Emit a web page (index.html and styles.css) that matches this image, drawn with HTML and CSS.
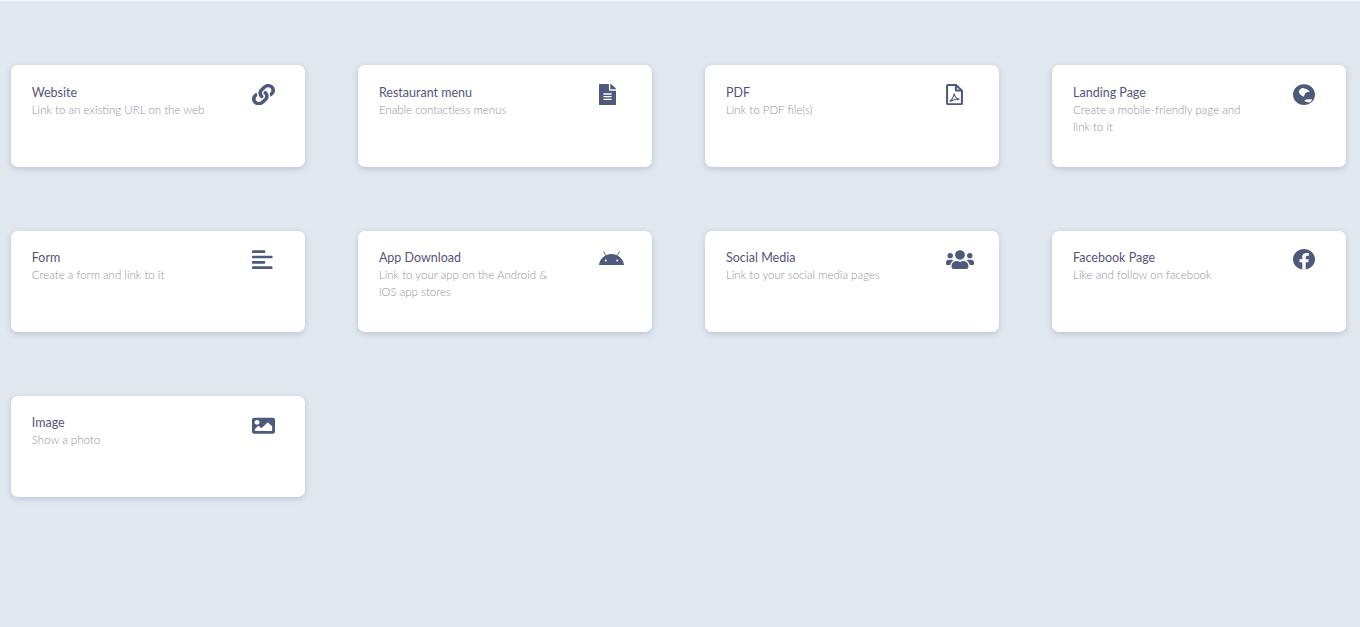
FILE: index.html
```html
<!DOCTYPE html>
<html lang="en">

<head>
    <meta charset="UTF-8">
    <meta name="viewport" content="width=device-width, initial-scale=1.0">
    <title>QR code types</title>
    <link rel="stylesheet" href="styles.css">
</head>

<body>

    <div class="type-grid">

        <div class="card">
            <div class="card-text">
                <h3>Website</h3>
                <p>Link to an existing URL on the web</p>
            </div>
            <svg class="icon icon-link" viewBox="0 0 512 512" preserveAspectRatio="none"><path d="M326.612 185.391c59.747 59.809 58.927 155.698.36 214.59-.11.12-.24.25-.36.37l-67.2 67.2c-59.27 59.27-155.699 59.262-214.96 0-59.27-59.26-59.27-155.7 0-214.96l37.106-37.106c9.84-9.84 26.786-3.3 27.294 10.606.648 17.722 3.826 35.527 9.69 52.721 1.986 5.822.567 12.262-3.783 16.612l-13.087 13.087c-28.026 28.026-28.905 73.66-1.155 101.96 28.024 28.579 74.086 28.749 102.325.51l67.2-67.19c28.191-28.191 28.073-73.757 0-101.83-3.701-3.694-7.429-6.564-10.341-8.569a16.037 16.037 0 0 1-6.947-12.606c-.396-10.567 3.348-21.456 11.698-29.806l21.054-21.055c5.521-5.521 14.182-6.199 20.584-1.731a152.482 152.482 0 0 1 20.522 17.197zM467.547 44.449c-59.261-59.262-155.69-59.27-214.96 0l-67.2 67.2c-.12.12-.25.25-.36.37-58.566 58.892-59.387 154.781.36 214.59a152.454 152.454 0 0 0 20.521 17.196c6.402 4.468 15.064 3.789 20.584-1.731l21.054-21.055c8.35-8.35 12.094-19.239 11.698-29.806a16.037 16.037 0 0 0-6.947-12.606c-2.912-2.005-6.64-4.875-10.341-8.569-28.073-28.073-28.191-73.639 0-101.83l67.2-67.19c28.239-28.239 74.3-28.069 102.325.51 27.75 28.3 26.872 73.934-1.155 101.96l-13.087 13.087c-4.35 4.35-5.769 10.79-3.783 16.612 5.864 17.194 9.042 34.999 9.69 52.721.509 13.906 17.454 20.446 27.294 10.606l37.106-37.106c59.271-59.259 59.271-155.699.001-214.959z"/></svg>
        </div>

        <div class="card">
            <div class="card-text">
                <h3>Restaurant menu</h3>
                <p>Enable contactless menus</p>
            </div>
            <svg class="icon icon-file" viewBox="0 0 384 512" preserveAspectRatio="none"><path d="M224 136V0H24C10.7 0 0 10.7 0 24v464c0 13.3 10.7 24 24 24h336c13.3 0 24-10.7 24-24V160H248c-13.2 0-24-10.8-24-24zm64 236c0 6.6-5.4 12-12 12H108c-6.6 0-12-5.4-12-12v-8c0-6.6 5.4-12 12-12h168c6.6 0 12 5.4 12 12v8zm0-64c0 6.6-5.4 12-12 12H108c-6.6 0-12-5.4-12-12v-8c0-6.6 5.4-12 12-12h168c6.6 0 12 5.4 12 12v8zm0-72v8c0 6.6-5.4 12-12 12H108c-6.6 0-12-5.4-12-12v-8c0-6.6 5.4-12 12-12h168c6.6 0 12 5.4 12 12zm96-114.1v6.1H256V0h6.1c6.4 0 12.5 2.5 17 7l97.9 98c4.5 4.5 7 10.6 7 16.9z"/></svg>
        </div>

        <div class="card">
            <div class="card-text">
                <h3>PDF</h3>
                <p>Link to PDF file(s)</p>
            </div>
            <svg class="icon icon-file" viewBox="0 0 384 512" preserveAspectRatio="none"><path class="pdf-outline" d="M48 24h176l136 136v304c0 13-11 24-24 24H48c-13 0-24-11-24-24V48c0-13 11-24 24-24z"/><path class="pdf-fold" d="M224 30v112c0 8 6 14 14 14h116"/><path class="pdf-mark" d="M84 420c40-30 80-90 100-190 10 70 50 120 120 136-70 0-150 14-220 54z"/></svg>
        </div>

        <div class="card">
            <div class="card-text">
                <h3>Landing Page</h3>
                <p>Create a mobile-friendly page and link to it</p>
            </div>
            <svg class="icon icon-globe" viewBox="0 0 496 512" preserveAspectRatio="none"><path fill-rule="evenodd" d="M248 8C111.03 8 0 119.03 0 256s111.03 248 248 248 248-111.03 248-248S384.97 8 248 8zM130 175c25-45 55-75 90-80l80 25c30 10 60 40 75 75-40 0-80 10-105 30-5 35-15 65-30 80-30-15-55-35-75-55-20-20-35-45-35-75zm120 225c50-30 120-40 180-25-10 35-30 55-50 70-40-5-90-15-130-45z"/></svg>
        </div>

        <div class="card">
            <div class="card-text">
                <h3>Form</h3>
                <p>Create a form and link to it</p>
            </div>
            <svg class="icon icon-align" viewBox="0 0 448 512" preserveAspectRatio="none"><path d="M12.83 352h262.34A12.82 12.82 0 0 0 288 339.17v-38.34A12.82 12.82 0 0 0 275.17 288H12.83A12.82 12.82 0 0 0 0 300.83v38.34A12.82 12.82 0 0 0 12.83 352zm0-256h262.34A12.82 12.82 0 0 0 288 83.17V44.83A12.82 12.82 0 0 0 275.17 32H12.83A12.82 12.82 0 0 0 0 44.83v38.34A12.82 12.82 0 0 0 12.83 96zM432 160H16a16 16 0 0 0-16 16v32a16 16 0 0 0 16 16h416a16 16 0 0 0 16-16v-32a16 16 0 0 0-16-16zm0 256H16a16 16 0 0 0-16 16v32a16 16 0 0 0 16 16h416a16 16 0 0 0 16-16v-32a16 16 0 0 0-16-16z"/></svg>
        </div>

        <div class="card">
            <div class="card-text">
                <h3>App Download</h3>
                <p>Link to your app on the Android &amp; iOS app stores</p>
            </div>
            <svg class="icon icon-android" viewBox="0 0 576 512" preserveAspectRatio="none"><path d="M420.55,301.93a24,24,0,1,1,24-24,24,24,0,0,1-24,24m-265.1,0a24,24,0,1,1,24-24,24,24,0,0,1-24,24m273.7-144.48,47.94-83a10,10,0,1,0-17.27-10h0l-48.54,84.07a301.25,301.25,0,0,0-246.56,0L116.18,64.45a10,10,0,1,0-17.27,10h0l47.94,83C64.53,202.22,8.24,285.55,0,384H576c-8.24-98.45-64.54-181.78-146.85-226.55"/></svg>
        </div>

        <div class="card">
            <div class="card-text">
                <h3>Social Media</h3>
                <p>Link to your social media pages</p>
            </div>
            <svg class="icon icon-users" viewBox="0 0 640 512" preserveAspectRatio="none"><path d="M96 224c35.3 0 64-28.7 64-64s-28.7-64-64-64-64 28.7-64 64 28.7 64 64 64zm448 0c35.3 0 64-28.7 64-64s-28.7-64-64-64-64 28.7-64 64 28.7 64 64 64zm32 32h-64c-17.6 0-33.5 7.1-45.1 18.6 40.3 22.1 68.9 62 75.1 109.4h66c17.7 0 32-14.3 32-32v-32c0-35.3-28.7-64-64-64zm-256 0c61.9 0 112-50.1 112-112S381.9 32 320 32 208 82.1 208 144s50.1 112 112 112zm76.8 32h-8.3c-20.8 10-43.9 16-68.5 16s-47.6-6-68.5-16h-8.3C179.6 288 128 339.6 128 403.2V432c0 26.5 21.5 48 48 48h288c26.5 0 48-21.5 48-48v-28.8c0-63.6-51.6-115.2-115.2-115.2zm-223.7-13.4C161.5 263.1 145.6 256 128 256H64c-35.3 0-64 28.7-64 64v32c0 17.7 14.3 32 32 32h65.9c6.3-47.4 34.9-87.3 75.2-109.4z"/></svg>
        </div>

        <div class="card">
            <div class="card-text">
                <h3>Facebook Page</h3>
                <p>Like and follow on facebook</p>
            </div>
            <svg class="icon icon-square" viewBox="8 8 496 512" preserveAspectRatio="none"><path d="M504 256C504 119 393 8 256 8S8 119 8 256c0 123.78 90.69 226.38 209.25 245V327.69h-63V256h63v-54.64c0-62.15 37-96.48 93.67-96.48 27.14 0 55.52 4.82 55.52 4.82v61h-31.28c-30.8 0-40.41 19.12-40.41 38.73V256h68.78l-11 71.69h-57.78V501C413.31 482.38 504 379.78 504 256z"/></svg>
        </div>

        <div class="card">
            <div class="card-text">
                <h3>Image</h3>
                <p>Show a photo</p>
            </div>
            <svg class="icon icon-link" viewBox="0 0 512 512" preserveAspectRatio="none"><path d="M464 448H48c-26.51 0-48-21.49-48-48V112c0-26.51 21.49-48 48-48h416c26.51 0 48 21.49 48 48v288c0 26.51-21.49 48-48 48zM112 120c-30.928 0-56 25.072-56 56s25.072 56 56 56 56-25.072 56-56-25.072-56-56-56zM64 384h384V272l-87.515-87.515c-4.686-4.686-12.284-4.686-16.971 0L208 320l-55.515-55.515c-4.686-4.686-12.284-4.686-16.971 0L64 336v48z"/></svg>
        </div>

    </div>

</body>

</html>
```

FILE: styles.css
```css
body {
    margin: 0;
    height: 627px;
    box-sizing: border-box;
    overflow: hidden;
    font-family: Lato, "Open Sans", sans-serif;
    background: #e1e8f0;
    border-top: 1px solid #f4f6f9;
}

.type-grid {
    display: grid;
    grid-template-columns: repeat(4, 293.8px);
    column-gap: 53.3px;
    row-gap: 64px;
    padding: 64.3px 0 0 11.2px;
}

.card {
    display: grid;
    grid-template-columns: 180px 1fr;
    column-gap: 40.4px;
    align-items: start;
    height: 101.3px;
    box-sizing: border-box;
    padding: 18.4px 0 0 20.6px;
    background: #fff;
    border-radius: 7px;
    box-shadow: 0 2px 6px rgba(60, 70, 100, 0.22);
}

.card-text h3 {
    margin: 0;
    font-size: 12.5px;
    font-weight: 400;
    line-height: 17px;
    color: #55557a;
}

.card-text p {
    margin: 0;
    font-size: 11.5px;
    font-weight: 300;
    line-height: 17.5px;
    color: #92929f;
}

.icon {
    display: block;
    height: 21.3px;
    margin-top: 0.5px;
    fill: #4e5a7c;
}

.icon-link { width: 23px; }
.icon-file { width: 17px; }
.icon-globe { width: 22px; }
.icon-align { width: 20.5px; }
.icon-android { width: 25px; }
.icon-users { width: 28px; }
.icon-square { width: 22px; }

.pdf-outline, .pdf-fold, .pdf-mark {
    fill: none;
    stroke: #4e5a7c;
}

.pdf-outline, .pdf-fold {
    stroke-width: 46;
}

.pdf-mark {
    stroke-width: 24;
}
```
